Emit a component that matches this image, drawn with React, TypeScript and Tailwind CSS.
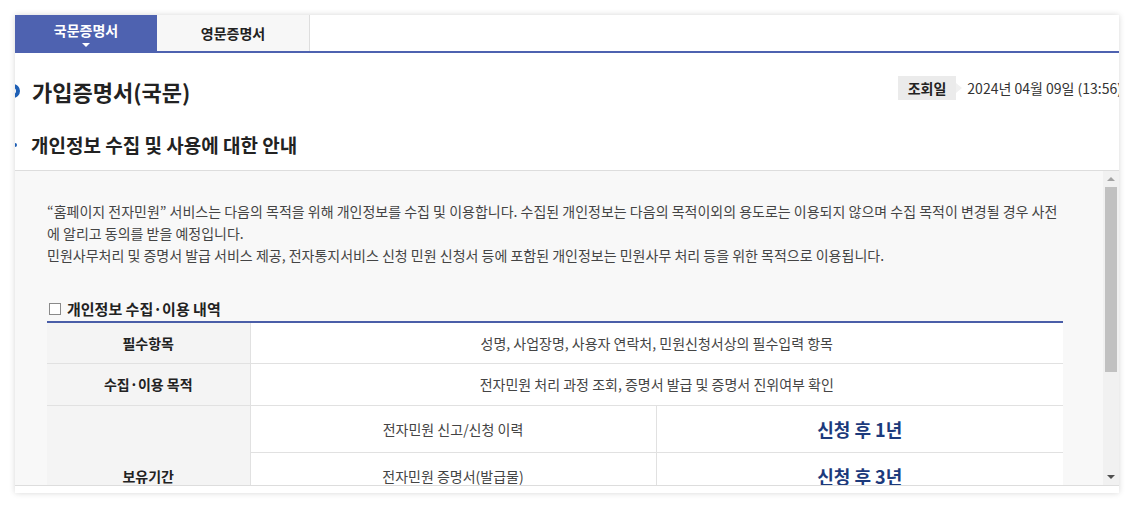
import React from "react";

const font = {
  fontFamily: '"Noto Sans CJK KR", "Noto Sans", sans-serif',
};

type Row = { label: string; value: string };

const basicRows: (Row & { h: string })[] = [
  {
    label: "필수항목",
    value: "성명, 사업장명, 사용자 연락처, 민원신청서상의 필수입력 항목",
    h: "h-[40px]",
  },
  {
    label: "수집·이용 목적",
    value: "전자민원 처리 과정 조회, 증명서 발급 및 증명서 진위여부 확인",
    h: "h-[42px]",
  },
];

const keepRows: Row[] = [
  { label: "전자민원 신고/신청 이력", value: "신청 후 1년" },
  { label: "전자민원 증명서(발급물)", value: "신청 후 3년" },
  { label: "전자통지서비스 신청 이력", value: "신청 후 5년" },
];

function Tabs() {
  return (
    <div className="flex h-[38px] border-b-2 border-[#4e62b0]">
      <div className="flex w-[142px] flex-col items-center bg-[#4e62b0] pt-[5px] text-[14px] font-bold text-white">
        <span className="leading-[20px]">국문증명서</span>
        <span className="mt-[3px] h-0 w-0 border-x-[4px] border-t-[4px] border-x-transparent border-t-white" />
      </div>
      <div className="flex w-[153px] items-center justify-center border-r border-[#dedede] bg-[#f7f7f7] text-[14px] font-bold text-[#222]">
        영문증명서
      </div>
    </div>
  );
}

function Header() {
  return (
    <>
      <div className="flex items-start justify-between pt-[23px]">
        <div className="flex h-[30px] items-center">
          <span className="-ml-[9px] mr-[12px] inline-block h-[14px] w-[14px] rounded-full border-[4px] border-[#1e5fb5]" />
          <h1 className="text-[22px] leading-[30px] font-bold text-[#222]">
            가입증명서(국문)
          </h1>
        </div>
        <div className="-mr-[3px] flex h-[24px] items-center">
          <span className="relative flex h-[24px] items-center bg-[#ebebeb] px-[10px] text-[14px] font-bold text-[#222]">
            조회일
            <span className="absolute -right-[6px] top-[7px] h-0 w-0 border-y-[5px] border-l-[6px] border-y-transparent border-l-[#f0f0f0]" />
          </span>
          <span className="ml-[11px] whitespace-nowrap text-[14px] text-[#333]">
            2024년 04월 09일 (13:56)
          </span>
        </div>
      </div>
      <div className="mt-[27px] flex h-[24px] items-center">
        <span className="-ml-[2px] mr-[14px] inline-block h-[4px] w-[4px] rounded-full bg-[#1e5fb5]" />
        <h2 className="text-[19px] leading-[24px] font-bold text-[#222]">
          개인정보 수집 및 사용에 대한 안내
        </h2>
      </div>
    </>
  );
}

function Scrollbar() {
  return (
    <div className="flex w-[16px] flex-col items-center bg-[#f1f1f1]">
      <div className="flex h-[16px] w-full items-center justify-center">
        <span className="h-0 w-0 border-x-[4px] border-b-[4px] border-x-transparent border-b-[#a3a3a3]" />
      </div>
      <div className="h-[185px] w-[12px] bg-[#c1c1c1]" />
      <div className="flex-1" />
      <div className="flex h-[16px] w-full items-center justify-center">
        <span className="h-0 w-0 border-x-[4px] border-t-[4px] border-x-transparent border-t-[#505050]" />
      </div>
    </div>
  );
}

function Notice() {
  return (
    <div className="flex h-[316px] border-y border-[#dddddd] bg-[#f8f8f8]">
      <div className="flex-1 overflow-hidden pt-[29px] pr-10 pl-8">
        <p className="text-[14px] leading-[22px] whitespace-nowrap text-[#444]">
          “홈페이지 전자민원” 서비스는 다음의 목적을 위해 개인정보를 수집 및
          이용합니다. 수집된 개인정보는 다음의 목적이외의 용도로는 이용되지
          않으며 수집 목적이 변경될 경우 사전
          <br />
          에 알리고 동의를 받을 예정입니다.
          <br />
          민원사무처리 및 증명서 발급 서비스 제공, 전자통지서비스 신청 민원
          신청서 등에 포함된 개인정보는 민원사무 처리 등을 위한 목적으로
          이용됩니다.
        </p>

        <h3 className="mt-[33px] flex items-center border-b-2 border-[#4a5ea8] pb-[2px] text-[15px] leading-[20px] font-bold text-[#222]">
          <span className="mr-[6px] ml-[2px] inline-block h-[12px] w-[12px] border border-[#8a8a8a] bg-white" />
          개인정보 수집·이용 내역
        </h3>

        <table className="w-full border-collapse text-[14px] leading-[20px] text-[#444]">
          <colgroup>
            <col className="w-[203px]" />
            <col className="w-[406px]" />
            <col />
          </colgroup>
          <tbody>
            {basicRows.map((r) => (
              <tr key={r.label} className={r.h}>
                <th className="border-b border-[#e1e1e1] bg-[#f4f4f4] font-bold text-[#222]">
                  {r.label}
                </th>
                <td
                  colSpan={2}
                  className="border-b border-l border-[#e1e1e1] bg-white text-center"
                >
                  {r.value}
                </td>
              </tr>
            ))}
            {keepRows.map((r, i) => (
              <tr key={r.label} className="h-[47px]">
                {i === 0 && (
                  <th
                    rowSpan={keepRows.length}
                    className="border-b border-[#e1e1e1] bg-[#f4f4f4] font-bold text-[#222]"
                  >
                    보유기간
                  </th>
                )}
                <td className="border-b border-l border-[#e1e1e1] bg-white text-center">
                  {r.label}
                </td>
                <td className="border-b border-l border-[#e1e1e1] bg-white text-center text-[18px] font-bold text-[#1c3a7c]">
                  {r.value}
                </td>
              </tr>
            ))}
          </tbody>
        </table>
      </div>
      <Scrollbar />
    </div>
  );
}

export default function App() {
  return (
    <div className="min-h-[509px] bg-white pt-[15px] pl-[15px]" style={font}>
      <div className="w-[1104px] overflow-hidden bg-white pb-[7px] shadow-[0_0_6px_rgba(0,0,0,0.16)]">
        <Tabs />
        <Header />
        <div className="mt-[13px]">
          <Notice />
        </div>
      </div>
    </div>
  );
}
